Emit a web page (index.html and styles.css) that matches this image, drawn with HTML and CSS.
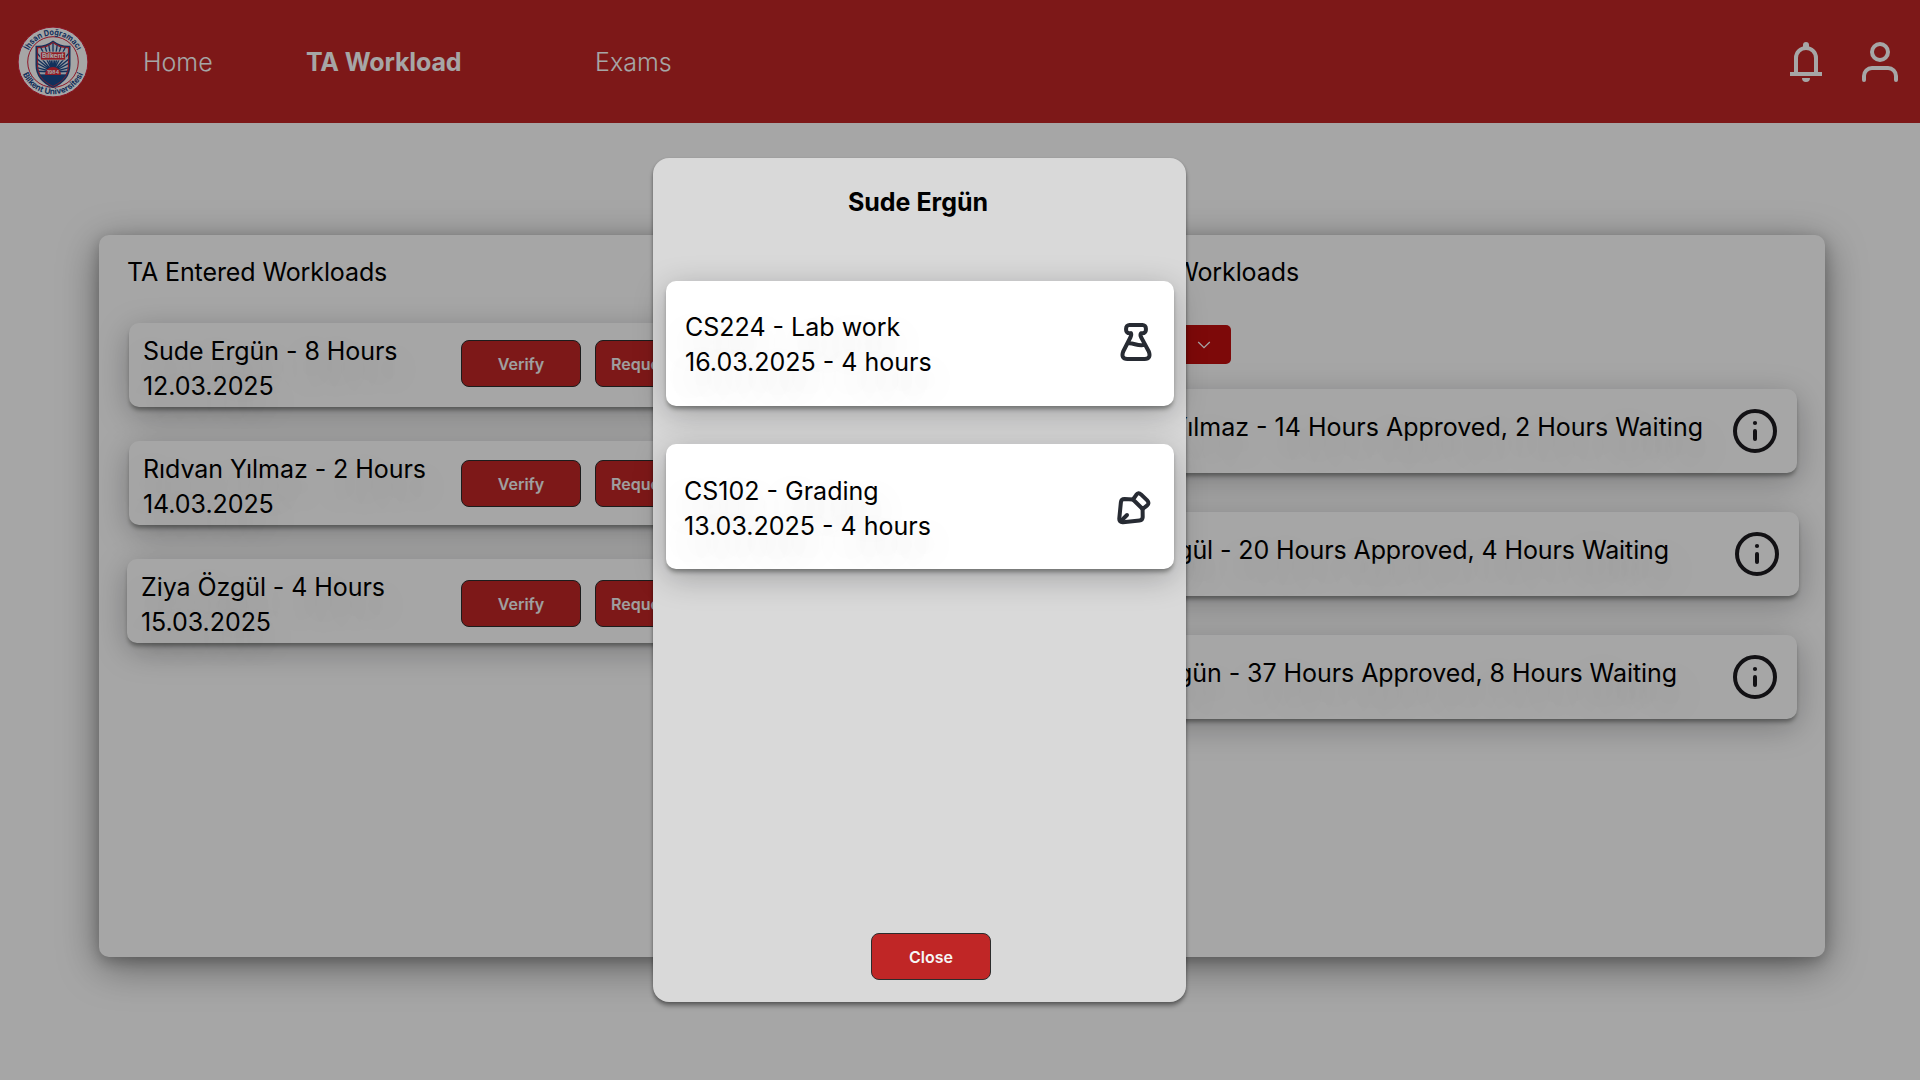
FILE: index.html
```html
<!DOCTYPE html>
<html lang="en">
<head>
<meta charset="utf-8">
<title>TA Workload</title>
<link rel="stylesheet" href="styles.css">
</head>
<body>
<header class="topbar">
  <svg class="logo" viewBox="0 0 72 72" width="72" height="72">
    <defs>
      <path id="arcTop" d="M9.200 36a26.800 26.800 0 0 1 53.600 0"/>
      <path id="arcBottom" d="M3.700 36a32.300 32.300 0 0 0 64.600 0"/>
      <clipPath id="shield"><path d="M36 16.500q7 5.500 15.500 5v17q0 14.500-15.500 21.500q-15.500-7-15.500-21.500v-17q8.500 .5 15.500-5z"/></clipPath>
    </defs>
    <circle cx="36" cy="36" r="34.900" fill="#fff" stroke="#d8203a" stroke-width="1"/>
    <circle cx="36" cy="36" r="25.300" fill="none" stroke="#d8203a" stroke-width="1"/>
    <path d="M36 14.500q8 6 17.500 5.200v19q0 16-17.500 23.300q-17.500-7.300-17.500-23.300v-19q9.500 .8 17.500-5.200z" fill="#1c4a8c"/>
    <path d="M36 16.500q7 5.500 15.500 5v17q0 14.500-15.500 21.500q-15.500-7-15.500-21.500v-17q8.500 .5 15.500-5z" fill="#e6ebf4" stroke="#e02a3a" stroke-width="1.200"/>
    <g clip-path="url(#shield)" stroke="#1c4a8c" stroke-width="1.300">
      <path d="M36 46V14M36 46L31 14M36 46L41 14M36 46L26 14M36 46L46 14M36 46L20 14M36 46L52 14M36 46L14 20M36 46L58 20M36 46L14 28M36 46L58 28M36 46L14 34M36 46L58 34M36 46L14 40M36 46L58 40M36 46L14 45M36 46L58 45"/>
      <rect x="18" y="49" width="36" height="14" fill="#1c4a8c"/>
    </g>
    <path d="M28 49a8 8 0 0 1 16 0z" fill="#e02a3a"/>
    <rect x="23.500" y="26" width="25" height="8" fill="#e02a3a" stroke="#fff" stroke-width=".6"/>
    <text x="36" y="32.400" class="logo-name" text-anchor="middle">Bilkent</text>
    <text x="36" y="47.900" class="logo-year" text-anchor="middle">1984</text>
    <text class="logo-ring"><textPath href="#arcTop" startOffset="50%" text-anchor="middle" textLength="60" lengthAdjust="spacingAndGlyphs">İhsan Doğramacı</textPath></text>
    <text class="logo-ring"><textPath href="#arcBottom" startOffset="50%" text-anchor="middle" textLength="77" lengthAdjust="spacingAndGlyphs">Bilkent Üniversitesi</textPath></text>
  </svg>
  <nav class="nav">
    <a class="nav-link nav-home">Home</a>
    <a class="nav-link nav-workload active">TA Workload</a>
    <a class="nav-link nav-exams">Exams</a>
  </nav>
  <div class="topbar-icons">
    <svg width="32" height="40" viewBox="0 0 32 40"><path d="M0 30h32v4H0zM12 36h8a4 4 0 0 1-8 0z" fill="#fff"/><path d="M6 31V16a10 10 0 0 1 20 0v15" fill="none" stroke="#fff" stroke-width="4"/><path d="M13 6V3a3 3 0 0 1 6 0v3z" fill="#fff"/></svg>
    <svg width="36" height="40" viewBox="0 0 36 40" fill="none" stroke="#fff" stroke-width="4" stroke-linecap="round"><circle cx="18" cy="10" r="8"/><path d="M2 38v-4a8 8 0 0 1 8-8h16a8 8 0 0 1 8 8v4"/></svg>
  </div>
</header>

<main class="panel">
  <section class="column entered">
    <h2 class="heading">TA Entered Workloads</h2>
    <div class="entry-list">
      <article class="card entry">
        <p class="entry-text">Sude Ergün - 8 Hours<br>12.03.2025</p>
        <button class="btn">Verify</button><button class="btn btn-wide">Request</button>
      </article>
      <article class="card entry entry-second">
        <p class="entry-text">Rıdvan Yılmaz - 2 Hours<br>14.03.2025</p>
        <button class="btn">Verify</button><button class="btn btn-wide">Request</button>
      </article>
      <article class="card entry entry-third">
        <p class="entry-text">Ziya Özgül - 4 Hours<br>15.03.2025</p>
        <button class="btn">Verify</button><button class="btn btn-wide">Request</button>
      </article>
    </div>
  </section>
  <section class="column totals">
    <h2 class="heading">Total Workloads</h2>
    <div class="dropdown"><svg width="14" height="8" viewBox="0 0 14 8" fill="none" stroke="#fff" stroke-width="1.300"><path d="M1.200 1L7 6.600L12.800 1"/></svg></div>
    <div class="total-list">
      <article class="card total">
        <p class="total-text t1">Rıdvan Yılmaz - 14 Hours Approved, 2 Hours Waiting</p>
        <svg class="info" width="44" height="44" viewBox="0 0 44 44"><circle cx="22" cy="22" r="20" fill="none" stroke="#1d1b20" stroke-width="4"/><circle cx="22" cy="14" r="2.100" fill="#1d1b20"/><path d="M22 22v8" stroke="#1d1b20" stroke-width="4" stroke-linecap="round"/></svg>
      </article>
      <article class="card total total-second">
        <p class="total-text t2">Ziya Özgül - 20 Hours Approved, 4 Hours Waiting</p>
        <svg class="info" width="44" height="44" viewBox="0 0 44 44"><circle cx="22" cy="22" r="20" fill="none" stroke="#1d1b20" stroke-width="4"/><circle cx="22" cy="14" r="2.100" fill="#1d1b20"/><path d="M22 22v8" stroke="#1d1b20" stroke-width="4" stroke-linecap="round"/></svg>
      </article>
      <article class="card total">
        <p class="total-text t3">Sude Ergün - 37 Hours Approved, 8 Hours Waiting</p>
        <svg class="info" width="44" height="44" viewBox="0 0 44 44"><circle cx="22" cy="22" r="20" fill="none" stroke="#1d1b20" stroke-width="4"/><circle cx="22" cy="14" r="2.100" fill="#1d1b20"/><path d="M22 22v8" stroke="#1d1b20" stroke-width="4" stroke-linecap="round"/></svg>
      </article>
    </div>
  </section>
</main>

<div class="overlay">
  <div class="modal">
    <h1 class="modal-title">Sude Ergün</h1>
    <article class="card task">
      <p class="task-text">CS224 - Lab work<br>16.03.2025 - 4 hours</p>
      <svg class="task-icon flask" width="32" height="38" viewBox="0 0 32 38" fill="none" stroke="#272b33" stroke-width="4" stroke-linejoin="round" stroke-linecap="round"><path d="M11 10.300H9.500a3.400 3.400 0 0 1-3.400-3.400V5.400a3.400 3.400 0 0 1 3.400-3.400h13a3.400 3.400 0 0 1 3.400 3.400v1.500a3.400 3.400 0 0 1-3.400 3.400H21q-1 1.500 0 3.700L28.800 28.500q2.600 7.300-4.200 7.500H7.400q-6.800-.2-4.200-7.500L10.600 14q1-2.200 .4-3.700M7.500 20.500C13 19 18 24 25 21.700"/></svg>
    </article>
    <article class="card task task-grading">
      <p class="task-text">CS102 - Grading<br>13.03.2025 - 4 hours</p>
      <svg class="task-icon pen" width="34" height="34" viewBox="0 0 34 34" fill="none" stroke="#272b33" stroke-width="4" stroke-linejoin="round" stroke-linecap="round"><path d="M16 8.500L7.500 8q-3.200 0-3.600 3.200L2.300 27.500q-.2 4 3.700 3.700l16.500-1.600q3-.3 3.200-3.400L25.600 18"/><path d="M16 8.500l3.300-4.700q2-2.700 4.700-.4l6.200 6q2.500 2.600 0 5L25.600 18z"/><path d="M4.500 29.500L10 24"/></svg>
    </article>
    <button class="btn btn-close">Close</button>
  </div>
</div>
</body>
</html>
```
FILE: styles.css
```css
* { box-sizing: border-box; }
body {
  position: relative;
  width: 1920px;
  height: 1080px;
  margin: 0;
  overflow: hidden;
  background: #fff;
  color: #000;
  font: 400 25px/35px Inter, sans-serif;
}
h1, h2, p { margin: 0; font-size: inherit; font-weight: 400; }

.topbar {
  display: flex;
  align-items: center;
  height: 123px;
  padding: 0 22px 0 17px;
  background: #c02626;
  color: #fff;
}
.logo { flex: none; }
.logo-ring { font: 700 8.2px Inter, sans-serif; fill: #1c4a8c; }
.logo-name { font: 700 6.6px Inter, sans-serif; fill: #fff; }
.logo-year { font: 700 5px Inter, sans-serif; fill: #fff; }
.nav { display: flex; flex: 1; margin-left: 54px; padding-top: 2px; }
.nav-link { font-weight: 300; white-space: nowrap; }
.nav-home { width: 163px; }
.nav-workload { width: 289px; }
.nav-link.active { font-weight: 700; letter-spacing: -.12px; }
.topbar-icons { display: flex; gap: 40px; }

.panel {
  display: flex;
  width: 1726px;
  height: 722px;
  margin: 112px 0 0 99px;
  border-radius: 10px;
  background: #fff;
  box-shadow: 0 10px 40px rgba(0, 0, 0, .42), 0 4px 14px rgba(0, 0, 0, .22);
}
.column { padding-top: 20px; }
.entered { width: 792px; padding-left: 30px; }
.totals { flex: 1; padding-right: 28px; }
.heading { white-space: nowrap; letter-spacing: -.1px; }
.entered .heading { margin-left: -2px; }
.totals .heading { width: 408px; text-align: right; }

.card {
  display: flex;
  border-radius: 10px;
  background: #fff;
  box-shadow: 0 4px 4px -1px rgba(12, 16, 13, .38), 0 8px 32px rgba(12, 12, 13, .28);
  text-shadow: 0 16px 36px rgba(0, 0, 0, .24);
}
.entry-list { display: flex; flex-direction: column; gap: 34px; margin-top: 33px; }
.entry { align-items: flex-start; height: 84px; padding: 11px 20px 0 14px; }
.entry-text { width: 318px; white-space: nowrap; letter-spacing: -.06px; }
.entry .btn { margin-top: 6px; }
.entry-second .btn { margin-top: 8px; }
.entry-third { margin-left: -2px; }
.entry-third .entry-text { width: 320px; }
.entry-third .btn { margin-top: 10px; }

.btn {
  flex: none;
  width: 120px;
  height: 47px;
  padding: 0;
  border: 1px solid #2c2c2c;
  border-radius: 8px;
  background: #c02626;
  color: #f5f5f5;
  font: 600 16px/16px Inter, sans-serif;
  text-shadow: none;
}
.btn-wide { width: 160px; margin-left: 14px; padding-left: 15px; text-align: left; }

.dropdown {
  display: flex;
  align-items: center;
  justify-content: flex-end;
  width: 340px;
  height: 39px;
  padding-right: 20px;
  border-radius: 5px;
  margin-top: 35px;
  background: #c00e0e;
}
.total-list { display: flex; flex-direction: column; gap: 39px; margin-top: 25px; }
.total { align-items: flex-start; justify-content: flex-end; height: 84px; padding: 20px 20px 0 0; }
.total-second { margin-right: -2px; }
.total-text { margin-top: 1px; white-space: nowrap; }
.t1 { margin-right: 30px; }
.t2 { margin-right: 66px; letter-spacing: -.1px; }
.t3 { margin-right: 56px; letter-spacing: -.06px; }
.info { flex: none; }

.overlay { position: absolute; inset: 0; background: rgba(0, 0, 0, .35); }
.modal {
  position: absolute;
  left: 653px;
  top: 158px;
  display: flex;
  flex-direction: column;
  width: 533px;
  height: 844px;
  padding: 27px 12px 22px 13px;
  border-radius: 16px;
  background: #d9d9d9;
  box-shadow: 0 4px 4px rgba(0, 0, 0, .35), 0 1px 3px rgba(0, 0, 0, .2);
}
.modal-title { font-weight: 700; text-align: center; margin: 0 4px 61px 0; }
.task { justify-content: space-between; height: 125px; padding: 29px 22px 0 19px; }
.task-grading { margin-top: 38px; padding: 30px 23px 0 18px; }
.flask { margin-top: 13px; }
.pen { margin-top: 17px; }
.btn-close { margin: auto 0 0 205px; }
```
